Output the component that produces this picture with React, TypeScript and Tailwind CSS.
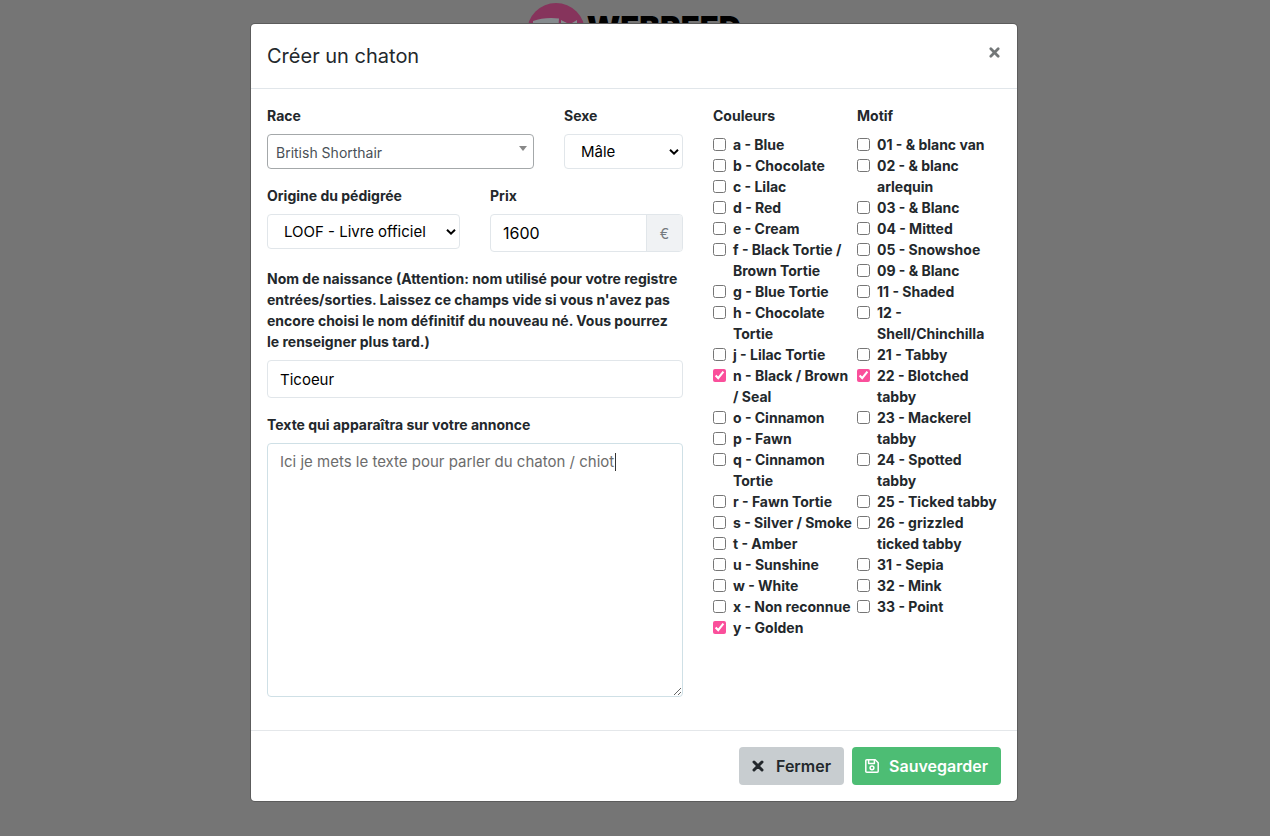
import React from "react";

const couleurs = [
  "a - Blue", "b - Chocolate", "c - Lilac", "d - Red", "e - Cream",
  "f - Black Tortie / Brown Tortie", "g - Blue Tortie", "h - Chocolate Tortie",
  "j - Lilac Tortie", "n - Black / Brown / Seal", "o - Cinnamon", "p - Fawn",
  "q - Cinnamon Tortie", "r - Fawn Tortie", "s - Silver / Smoke", "t - Amber",
  "u - Sunshine", "w - White", "x - Non reconnue", "y - Golden",
];

const motifs = [
  "01 - & blanc van", "02 - & blanc arlequin", "03 - & Blanc", "04 - Mitted",
  "05 - Snowshoe", "09 - & Blanc", "11 - Shaded", "12 - Shell/Chinchilla",
  "21 - Tabby", "22 - Blotched tabby", "23 - Mackerel tabby", "24 - Spotted tabby",
  "25 - Ticked tabby", "26 - grizzled ticked tabby", "31 - Sepia", "32 - Mink",
  "33 - Point",
];

const selected = ["n - Black / Brown / Seal", "y - Golden", "22 - Blotched tabby"];

function CheckGroup({ title, items }: { title: string; items: string[] }) {
  return (
    <fieldset className="min-w-0 flex-1">
      <legend className="mb-2 font-bold">{title}</legend>
      {items.map((item) => (
        <label key={item} className="flex items-start gap-[7px] pr-0.5 font-bold">
          <input
            type="checkbox"
            defaultChecked={selected.includes(item)}
            className="mt-1 size-[13px] shrink-0 accent-[#fa4f9b]"
          />
          <span>{item}</span>
        </label>
      ))}
    </fieldset>
  );
}

function Chevron() {
  return (
    <svg viewBox="0 0 10 6" className="pointer-events-none absolute right-1 top-1/2 h-1.5 w-2.5 -translate-y-1/2" fill="none" stroke="#000" strokeWidth="2">
      <path d="M1 0.8 5 4.6 9 0.8" />
    </svg>
  );
}

function Cross({ className }: { className: string }) {
  return (
    <svg viewBox="0 0 12 12" className={className} fill="none" stroke="currentColor" strokeWidth="3" strokeLinecap="round">
      <path d="M2 2 10 10M10 2 2 10" />
    </svg>
  );
}

function SaveIcon() {
  return (
    <svg viewBox="0 0 14 14" className="size-3.5" fill="none" stroke="currentColor" strokeWidth="1.5" strokeLinejoin="round">
      <path d="M1.8 0.8H10.2L13.2 3.8V12.2Q13.2 13.2 12.2 13.2H1.8Q0.8 13.2 0.8 12.2V1.8Q0.8 0.8 1.8 0.8Z" />
      <path d="M3.6 1V4.6H9.4V1" />
      <circle cx="7" cy="8.8" r="1.9" />
    </svg>
  );
}

export default function App() {
  return (
    <div className="min-h-screen bg-[#757575] font-['Inter',sans-serif] text-sm leading-[21px] text-[#23282c]">
      <div className="absolute inset-x-0 top-0 flex justify-center pr-0.5" aria-hidden="true">
        <div className="flex items-start gap-0.5">
          <svg viewBox="0 0 58 58" className="mt-[3px] size-[58px]">
            <circle cx="29" cy="29" r="29" fill="#86345c" />
            <path d="M6 18Q17 14 32 15.5L31 30H6Z" fill="#858b8e" />
            <path d="M34 17 40 20H45L50 17V30H34Z" fill="#858b8e" />
          </svg>
          <span className="mt-3 text-[31px] leading-8 font-black text-black">WEBREED</span>
        </div>
      </div>

      <div className="relative py-6 pr-[18px] pl-4">
        <div role="dialog" aria-labelledby="dialog-title" className="mx-auto max-w-[766px] rounded-[4px] bg-white shadow-[0_0_0_1px_#5c5c5c]">
          <header className="flex items-start justify-between border-b border-[#e1e6ea] p-4">
            <h1 id="dialog-title" className="text-xl leading-8 font-normal">Créer un chaton</h1>
            <button type="button" aria-label="Fermer la fenêtre" className="px-px pt-[7px] text-[#737778]">
              <Cross className="size-[11px]" />
            </button>
          </header>

          <form className="flex gap-[30px] px-4 pt-4 pb-[33px]">
            <div className="flex min-w-0 flex-[416] flex-col gap-4">
              <div className="flex gap-[30px]">
                <div className="flex min-w-0 flex-1 flex-col gap-2">
                  <label htmlFor="race" className="font-bold">Race</label>
                  <div className="relative">
                    <select id="race" className="h-[35px] w-full appearance-none rounded-[4px] border border-[#a4a8aa] bg-white px-2 pt-0.5 text-sm text-[#495057]">
                      <option>British Shorthair</option>
                    </select>
                    <svg viewBox="0 0 8 5" className="pointer-events-none absolute top-3 right-[7px] h-[5px] w-2" fill="#888">
                      <path d="M0 0H8L4 5Z" />
                    </svg>
                  </div>
                </div>
                <div className="flex w-[119px] flex-col gap-2">
                  <label htmlFor="sexe" className="font-bold">Sexe</label>
                  <div className="relative">
                    <select id="sexe" className="h-[35px] w-full appearance-none rounded-[4px] border border-[#e1e6ea] bg-white px-4 text-[15px] text-black">
                      <option>Mâle</option>
                    </select>
                    <Chevron />
                  </div>
                </div>
              </div>

              <div className="flex gap-[30px]">
                <div className="flex min-w-0 flex-1 flex-col gap-2">
                  <label htmlFor="origine" className="font-bold">Origine du pédigrée</label>
                  <div className="relative">
                    <select id="origine" className="h-[35px] w-full appearance-none rounded-[4px] border border-[#e1e6ea] bg-white px-4 text-[15px] text-black">
                      <option>LOOF - Livre officiel</option>
                    </select>
                    <Chevron />
                  </div>
                </div>
                <div className="flex min-w-0 flex-1 flex-col gap-2">
                  <label htmlFor="prix" className="font-bold">Prix</label>
                  <div className="flex h-[38px] overflow-hidden rounded-[4px] border border-[#e1e6ea]">
                    <input id="prix" type="text" defaultValue="1600" className="min-w-0 flex-1 px-3 text-base text-black outline-none" />
                    <span className="flex w-9 items-center justify-center border-l border-[#e1e6ea] bg-[#f0f2f4] text-[#757a7e]">€</span>
                  </div>
                </div>
              </div>

              <div className="flex flex-col gap-2">
                <label htmlFor="nom" className="font-bold">
                  Nom de naissance (Attention: nom utilisé pour votre registre entrées/sorties. Laissez ce champs vide si vous n'avez pas encore choisi le nom définitif du nouveau né. Vous pourrez le renseigner plus tard.)
                </label>
                <input id="nom" type="text" defaultValue="Ticoeur" className="h-[38px] w-full rounded-[4px] border border-[#e1e6ea] px-3 text-[15px] text-black" />
              </div>

              <div className="flex flex-col gap-2">
                <label htmlFor="texte" className="font-bold">Texte qui apparaîtra sur votre annonce</label>
                <div className="relative flex">
                  <textarea id="texte" defaultValue="Ici je mets le texte pour parler du chaton / chiot" className="h-[254px] w-full resize-y rounded-[4px] border border-[#cfe0e6] px-3 py-1.5 text-[15px] leading-6 text-[#6c6c6c]" />
                  <span className="absolute top-2.5 left-[348px] h-[18px] w-px bg-[#333]" />
                </div>
              </div>
            </div>

            <div className="flex min-w-0 flex-[288]">
              <CheckGroup title="Couleurs" items={couleurs} />
              <CheckGroup title="Motif" items={motifs} />
            </div>
          </form>

          <footer className="flex justify-end gap-2 border-t border-[#e4e7ea] p-4">
            <button type="button" className="flex h-[38px] items-center gap-3 rounded-[4px] bg-[#c8cdd0] px-[13px] text-base font-semibold text-[#23282c]">
              <Cross className="size-3" />
              Fermer
            </button>
            <button type="button" className="flex h-[38px] items-center gap-2.5 rounded-[4px] bg-[#4dbd74] px-[13px] text-base font-semibold text-white">
              <SaveIcon />
              Sauvegarder
            </button>
          </footer>
        </div>
      </div>
    </div>
  );
}
